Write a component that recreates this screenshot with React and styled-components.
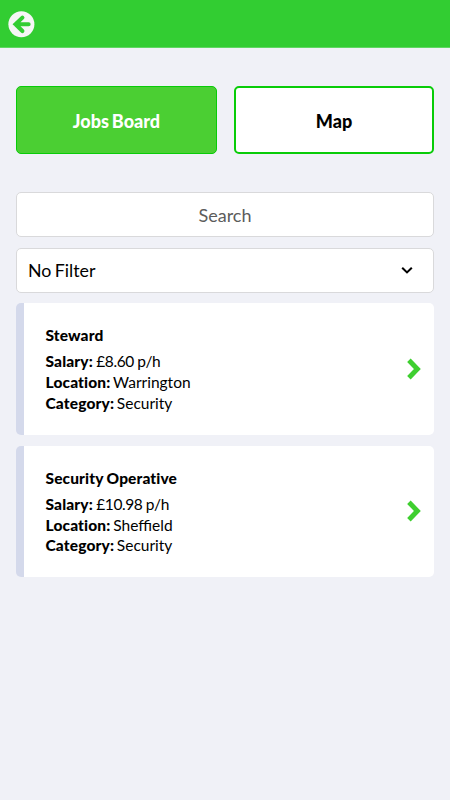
import React, { useState } from "react";
import styled, { createGlobalStyle } from "styled-components";

const GlobalStyle = createGlobalStyle`
  * {
    box-sizing: border-box;
  }
  body {
    margin: 0;
    background: #f0f1f7;
    font-family: Lato, sans-serif;
    color: #000;
  }
`;
const Page = styled.div`
  min-height: 800px;
  background: #f0f1f7;
`;
const Header = styled.header`
  height: 48px;
  padding-left: 8px;
  display: flex;
  align-items: center;
  background: #32cd32;
  border-bottom: 1px solid #5fd862;
`;
const BackButton = styled.button`
  display: flex;
  padding: 1px 0 0;
  border: none;
  background: none;
  color: #f6f6f6;
  cursor: pointer;
`;
const Content = styled.main`
  padding: 38px 16px 0;
`;
const TabRow = styled.div`
  display: grid;
  grid-template-columns: 201px 200px;
  justify-content: space-between;
  margin-bottom: 38px;
`;
const Tab = styled.button`
  height: 68px;
  padding: 1px 0 0;
  border: ${(props) => (props.$active ? "1px" : "2px")} solid #08cc08;
  border-radius: 5px;
  background: ${(props) => (props.$active ? "#4bcf33" : "#fff")};
  color: ${(props) => (props.$active ? "#fff" : "#000")};
  font-family: inherit;
  font-size: 18px;
  font-weight: 900;
  word-spacing: -1.4px;
  cursor: pointer;
`;
const Search = styled.input`
  display: block;
  width: 100%;
  height: 45px;
  border: 1px solid #d9d9db;
  border-radius: 5px;
  background: #fff;
  font-family: inherit;
  font-size: 18px;
  text-align: center;
  outline: none;
  &::placeholder {
    color: #5c5c5c;
    opacity: 1;
  }
`;
const Filter = styled.button`
  display: flex;
  align-items: center;
  justify-content: space-between;
  width: 100%;
  height: 45px;
  margin: 11px 0 10px;
  padding: 0 20px 1px 11px;
  border: 1px solid #d9d9db;
  border-radius: 5px;
  background: #fff;
  color: #000;
  font-family: inherit;
  font-size: 17.8px;
  word-spacing: -1.2px;
  cursor: pointer;
`;
const Card = styled.article`
  display: flex;
  align-items: center;
  justify-content: space-between;
  height: 131.5px;
  margin-bottom: 11.1px;
  padding: 0 13px 0 21.5px;
  border-left: 8px solid #d4d9eb;
  border-radius: 5px;
  background: #fff;
`;
const JobTitle = styled.h2`
  margin: 1px 0 5.5px;
  font-size: 15.5px;
  line-height: 20.6px;
  font-weight: 900;
  letter-spacing: 0.12px;
  word-spacing: -0.4px;
  font-variant-ligatures: none;
`;
const Detail = styled.p`
  margin: 0;
  font-size: 15.5px;
  line-height: 20.6px;
  word-spacing: -1.2px;
  b {
    font-weight: 900;
    letter-spacing: 0.14px;
  }
`;
const Amount = styled.span`
  margin-left: 0.5px;
  letter-spacing: -0.38px;
  word-spacing: -0.2px;
`;

const BackIcon = () => (
  <svg width="27" height="27" viewBox="0 0 27 27" fill="none">
    <circle cx="13.4" cy="13.2" r="13" fill="currentColor" />
    <path
      d="M14.4 6.6 7.5 13.3l6.9 6.7M7.6 13.3h13"
      stroke="#32cd32"
      strokeWidth="4.1"
      strokeLinecap="round"
    />
  </svg>
);

const Chevron = () => (
  <svg width="14" height="22" viewBox="0 0 14 22" fill="none">
    <path
      d="M1.9 2.2 10.4 11 1.9 19.8"
      stroke="#3fcf30"
      strokeWidth="4.9"
    />
  </svg>
);

const jobs = [
  { id: 0, title: "Steward", salary: "£8.60 p/h", location: "Warrington", category: "Security" },
  { id: 1, title: "Security Operative", salary: "£10.98 p/h", location: "Sheffield", category: "Security" },
];

const JobCard = ({ job }) => (
  <Card>
    <div>
      <JobTitle>{job.title}</JobTitle>
      <Detail>
        <b>Salary:</b> <Amount>{job.salary}</Amount>
      </Detail>
      <Detail>
        <b>Location:</b> {job.location}
      </Detail>
      <Detail>
        <b>Category:</b> {job.category}
      </Detail>
    </div>
    <Chevron />
  </Card>
);

export default function App() {
  const [tab, setTab] = useState("board");
  const [search, setSearch] = useState("");

  return (
    <Page>
      <GlobalStyle />
      <Header>
        <BackButton aria-label="Back">
          <BackIcon />
        </BackButton>
      </Header>
      <Content>
        <TabRow>
          <Tab $active={tab === "board"} onClick={() => setTab("board")}>
            Jobs Board
          </Tab>
          <Tab $active={tab === "map"} onClick={() => setTab("map")}>
            Map
          </Tab>
        </TabRow>
        <Search
          placeholder="Search"
          value={search}
          onChange={(e) => setSearch(e.target.value)}
        />
        <Filter>
          No Filter
          <svg width="12" height="8" viewBox="0 0 12 8" fill="none">
            <path d="M1.2 1.8 6 6.4 10.8 1.8" stroke="#000" strokeWidth="2.1" />
          </svg>
        </Filter>
        {jobs.map((job) => (
          <JobCard key={job.id} job={job} />
        ))}
      </Content>
    </Page>
  );
}
